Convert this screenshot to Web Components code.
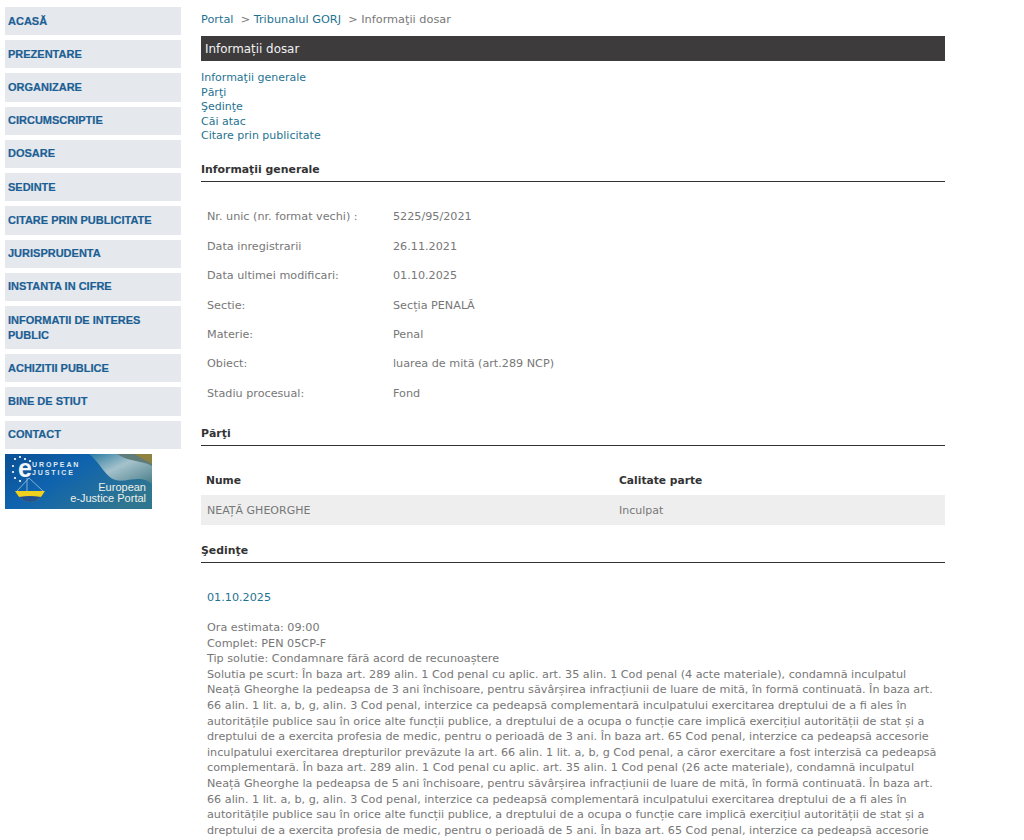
<!DOCTYPE html>
<html lang="ro">
<head>
<meta charset="utf-8">
<title>Informații dosar</title>
<style>
  html, body { margin: 0; background: #fff; height: 840px; overflow: hidden; }
  body { font-family: "DejaVu Sans", sans-serif; }
</style>
</head>
<body>
<app-page>
  <side-menu slot="side"></side-menu>
  <bread-crumbs slot="main"></bread-crumbs>
  <page-title slot="main">Informații dosar</page-title>
  <anchor-list slot="main"></anchor-list>
  <section-head slot="main" style="--top:17px">Informaţii generale</section-head>
  <info-table slot="main"></info-table>
  <section-head slot="main" style="--top:16.5px">Părţi</section-head>
  <parti-table slot="main"></parti-table>
  <section-head slot="main" style="--top:17px">Şedinţe</section-head>
  <sedinta-item slot="main"></sedinta-item>
</app-page>

<script>
class AppPage extends HTMLElement {
  constructor() {
    super();
    this.attachShadow({ mode: "open" }).innerHTML = `
    <style>
      :host { display: flex; align-items: flex-start; width: 1024px; height: 840px; overflow: hidden; }
      .side { width: 176px; margin: 7px 0 0 5px; flex: none; }
      .main { width: 744px; margin: 12px 0 0 20px; flex: none; }
    </style>
    <div class="side"><slot name="side"></slot></div>
    <div class="main"><slot name="main"></slot></div>`;
  }
}

class SideMenu extends HTMLElement {
  constructor() {
    super();
    this.attachShadow({ mode: "open" });
  }

  connectedCallback() {
    const items = ["ACASĂ", "PREZENTARE", "ORGANIZARE", "CIRCUMSCRIPTIE", "DOSARE", "SEDINTE",
      "CITARE PRIN PUBLICITATE", "JURISPRUDENTA", "INSTANTA IN CIFRE", "INFORMATII DE INTERES PUBLIC",
      "ACHIZITII PUBLICE", "BINE DE STIUT", "CONTACT"];
    this.shadowRoot.innerHTML = `
    <style>
      :host { display: flex; flex-direction: column; gap: 5px; font: bold 11px/15px "Liberation Sans", Arial, sans-serif; }
      a { display: block; background: #e5e8ed; color: #1c5f94; padding: 6.62px 3px; text-decoration: none; -webkit-text-stroke: 0.2px #1c5f94; }
    </style>
    ${items.map((t) => `<a href="#">${t}</a>`).join("")}
    <e-justice></e-justice>`;
  }
}

class EJustice extends HTMLElement {
  constructor() {
    super();
    this.attachShadow({ mode: "open" }).innerHTML = `
    <style>
      :host { display: block; width: 147px; height: 55px; position: relative; overflow: hidden; color: #f4f6f8; font-family: "Liberation Sans", Arial, sans-serif; }
      svg { position: absolute; inset: 0; }
      span { position: absolute; white-space: nowrap; }
      .e { left: 13px; top: 2px; font: bold 25px/25px "Liberation Sans", sans-serif; }
      .t { left: 27px; font-size: 7px; line-height: 8px; letter-spacing: 1.9px; color: #dfe8f2; }
      .p { right: 6px; font-size: 11px; line-height: 11px; font-weight: normal; color: #eef0e8; }
    </style>
    <svg width="147" height="55" viewBox="0 0 147 55">
      <defs>
        <linearGradient id="bg" x1="0" x2="1" y1="0" y2="0.6">
          <stop offset="0" stop-color="#0b4f94"/><stop offset=".45" stop-color="#0f63ae"/><stop offset="1" stop-color="#2f7691"/>
        </linearGradient>
        <linearGradient id="fold" x1="0" x2="1" y1="0" y2="1">
          <stop offset="0" stop-color="#2f7f9e"/><stop offset=".45" stop-color="#c7d8d6"/><stop offset="1" stop-color="#4f7f86"/>
        </linearGradient>
      </defs>
      <rect width="147" height="55" fill="url(#bg)"/>
      <path d="M84 0H147V30C134 18 118 32 106 24C98 18 94 8 84 0Z" fill="url(#fold)" opacity=".8"/>
      <path d="M112 0H147V12C136 6 124 8 112 0Z" fill="#5f7c78"/>
      <path d="M130 0H147V10C142 6 136 5 130 0Z" fill="#8f8240"/>
      <g fill="#fff">
        <circle cx="8" cy="12" r="1.1"/><circle cx="10" cy="5" r="1.1"/><circle cx="15" cy="3" r="1.1"/>
        <circle cx="20" cy="5" r="1.1"/><circle cx="25" cy="7" r="1.1"/><circle cx="8" cy="18" r="1.1"/>
        <circle cx="10" cy="24" r="1.1"/><circle cx="15" cy="27" r="1.1"/>
      </g>
      <path d="M24 24L12 37M24 24L38 37M22 24L22 37" stroke="#9fc4e0" stroke-width=".8" fill="none"/>
      <path d="M10 37H40Q34 48 25 48Q16 48 10 37Z" fill="#efd01e"/>
      <path d="M14 43Q25 41 36 43Q31 48 25 48Q19 48 14 43Z" fill="#23518f"/>
    </svg>
    <span class="e">e</span>
    <span class="t" style="top:7px">UROPEAN</span>
    <span class="t" style="top:15px">JUSTICE</span>
    <span class="p" style="top:28px">European</span>
    <span class="p" style="top:39px">e-Justice Portal</span>`;
  }
}

class BreadCrumbs extends HTMLElement {
  constructor() {
    super();
    this.attachShadow({ mode: "open" }).innerHTML = `
    <style>
      :host { display: flex; height: 16px; font: 11.3px/16px "DejaVu Sans", sans-serif; color: #777; white-space: pre; }
      a { color: #1f7391; text-decoration: none; }
    </style>
    <a href="#">Portal</a><span>  &gt; </span><a href="#">Tribunalul GORJ</a><span>  &gt; Informaţii dosar</span>`;
  }
}

class PageTitle extends HTMLElement {
  constructor() {
    super();
    this.attachShadow({ mode: "open" }).innerHTML = `
    <style>
      :host { display: block; margin-top: 8px; height: 25px; padding-left: 4px; background: #3d3b3c; color: #f2f2f2; font: 11.9px/27px "DejaVu Sans", sans-serif; }
    </style>
    <slot></slot>`;
  }
}

class AnchorList extends HTMLElement {
  constructor() {
    super();
    this.attachShadow({ mode: "open" }).innerHTML = `
    <style>
      :host { display: block; margin-top: 10px; font: 11px/14.6px "DejaVu Sans", sans-serif; }
      a { display: block; color: #1f7391; text-decoration: none; }
    </style>
    <a href="#">Informaţii generale</a>
    <a href="#">Părţi</a>
    <a href="#">Şedinţe</a>
    <a href="#">Căi atac</a>
    <a href="#">Citare prin publicitate</a>`;
  }
}

class SectionHead extends HTMLElement {
  constructor() {
    super();
    this.attachShadow({ mode: "open" }).innerHTML = `
    <style>
      :host { display: block; margin-top: var(--top, 0); padding: 1px 0 3px; border-bottom: 1px solid #333; color: #333; font: bold 10.9px/16px "DejaVu Sans", sans-serif; }
    </style>
    <slot></slot>`;
  }
}

class InfoTable extends HTMLElement {
  constructor() {
    super();
    this.attachShadow({ mode: "open" });
  }

  connectedCallback() {
    const rows = [["Nr. unic (nr. format vechi) :", "5225/95/2021"], ["Data inregistrarii", "26.11.2021"],
      ["Data ultimei modificari:", "01.10.2025"], ["Sectie:", "Secția PENALĂ"], ["Materie:", "Penal"],
      ["Obiect:", "luarea de mită (art.289 NCP)"], ["Stadiu procesual:", "Fond"]];
    this.shadowRoot.innerHTML = `
    <style>
      :host { display: grid; grid-template-columns: 186px 1fr; grid-auto-rows: 29.4px; margin-top: 20.5px; padding-left: 6px; height: 206px; font: 11.2px/29.4px "DejaVu Sans", sans-serif; color: #777; }
    </style>
    ${rows.map((r) => `<div>${r[0]}</div><div>${r[1]}</div>`).join("")}`;
  }
}

class PartiTable extends HTMLElement {
  constructor() {
    super();
    this.attachShadow({ mode: "open" }).innerHTML = `
    <style>
      :host { display: block; margin-top: 20px; font: 11px/29px "DejaVu Sans", sans-serif; color: #777; }
      .row { display: grid; grid-template-columns: 413px 1fr; padding-left: 5px; }
      .head { font-weight: bold; font-size: 10.7px; color: #333; height: 29px; }
      .body { background: #eee; height: 30px; line-height: 32px; padding-left: 6px; grid-template-columns: 412px 1fr; }
    </style>
    <div class="row head"><div>Nume</div><div>Calitate parte</div></div>
    <div class="row body"><div>NEAȚĂ GHEORGHE</div><div>Inculpat</div></div>`;
  }
}

class SedintaItem extends HTMLElement {
  constructor() {
    super();
    this.attachShadow({ mode: "open" });
  }

  connectedCallback() {
    const lines = [
      "Ora estimata: 09:00",
      "Complet: PEN 05CP-F",
      "Tip solutie: Condamnare fără acord de recunoaștere",
      "Solutia pe scurt: În baza art. 289 alin. 1 Cod penal cu aplic. art. 35 alin. 1 Cod penal (4 acte materiale), condamnă inculpatul",
      "Neață Gheorghe la pedeapsa de 3 ani închisoare, pentru săvârșirea infracțiunii de luare de mită, în formă continuată. În baza art.",
      "66 alin. 1 lit. a, b, g, alin. 3 Cod penal, interzice ca pedeapsă complementară inculpatului exercitarea dreptului de a fi ales în",
      "autoritățile publice sau în orice alte funcții publice, a dreptului de a ocupa o funcție care implică exercițiul autorității de stat și a",
      "dreptului de a exercita profesia de medic, pentru o perioadă de 3 ani. În baza art. 65 Cod penal, interzice ca pedeapsă accesorie",
      "inculpatului exercitarea drepturilor prevăzute la art. 66 alin. 1 lit. a, b, g Cod penal, a căror exercitare a fost interzisă ca pedeapsă",
      "complementară. În baza art. 289 alin. 1 Cod penal cu aplic. art. 35 alin. 1 Cod penal (26 acte materiale), condamnă inculpatul",
      "Neață Gheorghe la pedeapsa de 5 ani închisoare, pentru săvârșirea infracțiunii de luare de mită, în formă continuată. În baza art.",
      "66 alin. 1 lit. a, b, g, alin. 3 Cod penal, interzice ca pedeapsă complementară inculpatului exercitarea dreptului de a fi ales în",
      "autoritățile publice sau în orice alte funcții publice, a dreptului de a ocupa o funcție care implică exercițiul autorității de stat și a",
      "dreptului de a exercita profesia de medic, pentru o perioadă de 5 ani. În baza art. 65 Cod penal, interzice ca pedeapsă accesorie"];
    this.shadowRoot.innerHTML = `
    <style>
      :host { display: block; margin-top: 27px; padding-left: 6px; font: 11.2px/15.6px "DejaVu Sans", sans-serif; color: #777; }
      .date { color: #1f7391; line-height: 16px; margin-bottom: 14px; }
      div { white-space: nowrap; }
    </style>
    <div class="date">01.10.2025</div>
    ${lines.map((l) => `<div>${l}</div>`).join("")}`;
  }
}

customElements.define("app-page", AppPage);
customElements.define("side-menu", SideMenu);
customElements.define("e-justice", EJustice);
customElements.define("bread-crumbs", BreadCrumbs);
customElements.define("page-title", PageTitle);
customElements.define("anchor-list", AnchorList);
customElements.define("section-head", SectionHead);
customElements.define("info-table", InfoTable);
customElements.define("parti-table", PartiTable);
customElements.define("sedinta-item", SedintaItem);
</script>
</body>
</html>
